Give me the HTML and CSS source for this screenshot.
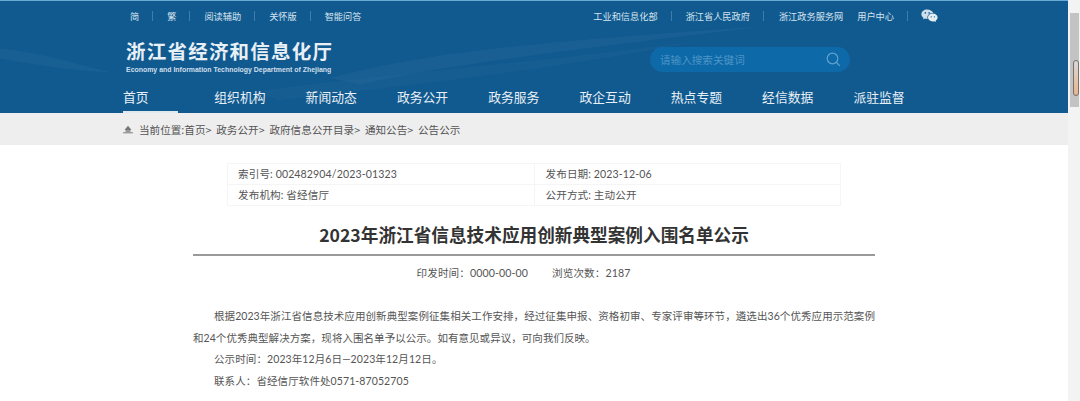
FILE: index.html
```html
<!DOCTYPE html>
<html lang="zh-CN">
<head>
<meta charset="utf-8">
<title>2023年浙江省信息技术应用创新典型案例入围名单公示</title>
<link rel="stylesheet" href="styles.css">
</head>
<body>
<div class="window">
  <div class="page">
    <header class="header">
      <svg class="waves" viewBox="0 0 1068 113" preserveAspectRatio="none" aria-hidden="true">
        <path d="M0 48 C40 52 70 62 110 72 C70 70 35 64 0 58Z" fill="#fff" opacity=".03"/>
        <path d="M330 78 C430 50 560 40 760 26 C600 46 470 60 360 84Z" fill="#fff" opacity=".035"/>
        <path d="M250 92 C400 72 540 62 700 40 C560 68 420 84 280 100Z" fill="#fff" opacity=".025"/>
      </svg>
      <div class="topbar">
        <ul class="links links-left">
          <li class="link sep">简</li>
          <li class="link sep">繁</li>
          <li class="link sep">阅读辅助</li>
          <li class="link sep">关怀版</li>
          <li class="link">智能问答</li>
        </ul>
        <ul class="links links-right">
          <li class="link sep">工业和信息化部</li>
          <li class="link sep">浙江省人民政府</li>
          <li class="link">浙江政务服务网</li>
          <li class="link sep user">用户中心</li>
          <li class="wechat">
            <svg width="17" height="14" viewBox="0 0 17 14" aria-hidden="true">
              <path d="M6.2 0.6C2.9 0.6 0.4 2.7 0.4 5.3c0 1.5.8 2.7 2.1 3.6L2 10.6l2-1c.7.2 1.4.3 2.1.3h.5a4 4 0 0 1-.2-1.3c0-2.6 2.4-4.5 5.4-4.5h.4C11.200 2.100 8.900.6 6.200.6Z" fill="#cfdfeb"/>
              <path d="M16.600 8.500c0-2.200-2.200-3.900-4.800-3.900s-4.800 1.700-4.800 3.900 2.200 3.900 4.800 3.900c.6 0 1.100-.1 1.600-.2l1.600.9-.4-1.400c1.200-.8 2-1.900 2-3.200Z" fill="#e6eef4"/>
              <circle cx="4.300" cy="3.900" r=".8" fill="#115a90"/>
              <circle cx="8.100" cy="3.900" r=".8" fill="#115a90"/>
              <circle cx="10.200" cy="7.800" r=".65" fill="#115a90"/>
              <circle cx="13.400" cy="7.800" r=".65" fill="#115a90"/>
            </svg>
          </li>
        </ul>
      </div>
      <div class="brand-row">
        <div class="brand">
          <div class="brand-cn">浙江省经济和信息化厅</div>
          <div class="brand-en">Economy and Information Technology Department of Zhejiang</div>
        </div>
        <div class="search">
          <span class="search-text">请输入搜索关键词</span>
          <svg width="15" height="15" viewBox="0 0 15 15" aria-hidden="true">
            <circle cx="6.500" cy="6.500" r="5.300" fill="none" stroke="#5fa3cf" stroke-width="1.200"/>
            <path d="M10.500 10.500L13.800 13.800" stroke="#5fa3cf" stroke-width="1.200" fill="none"/>
          </svg>
        </div>
      </div>
      <nav class="nav">
        <a class="nav-item active"><span>首页</span></a>
        <a class="nav-item"><span>组织机构</span></a>
        <a class="nav-item"><span>新闻动态</span></a>
        <a class="nav-item"><span>政务公开</span></a>
        <a class="nav-item"><span>政务服务</span></a>
        <a class="nav-item"><span>政企互动</span></a>
        <a class="nav-item"><span>热点专题</span></a>
        <a class="nav-item"><span>经信数据</span></a>
        <a class="nav-item"><span>派驻监督</span></a>
      </nav>
    </header>
    <div class="crumbs">
      <svg class="home" width="10" height="9" viewBox="0 0 10 9" aria-hidden="true">
        <path d="M5 .8L1.500 5h7Z" fill="#777"/>
        <path d="M.2 7.300h9.600v1H.2Z" fill="#777"/>
        <path d="M2.500 5h5v2h-5Z" fill="#999"/>
      </svg>
      <span>当前位置:首页&gt; 政务公开&gt; 政府信息公开目录&gt; 通知公告&gt; 公告公示</span>
    </div>
    <main class="main">
      <table class="info">
        <tr><td>索引号: 002482904/2023-01323</td><td>发布日期: 2023-12-06</td></tr>
        <tr><td>发布机构: 省经信厅</td><td>公开方式: 主动公开</td></tr>
      </table>
      <h1 class="title">2023年浙江省信息技术应用创新典型案例入围名单公示</h1>
      <div class="meta"><span>印发时间：0000-00-00</span><span>浏览次数：2187</span></div>
      <article class="article">
        <p>根据2023年浙江省信息技术应用创新典型案例征集相关工作安排，经过征集申报、资格初审、专家评审等环节，遴选出36个优秀应用示范案例和24个优秀典型解决方案，现将入围名单予以公示。如有意见或异议，可向我们反映。</p>
        <p>公示时间：2023年12月6日—2023年12月12日。</p>
        <p>联系人：省经信厅软件处0571-87052705</p>
      </article>
    </main>
  </div>
  <aside class="scrollbar" aria-hidden="true">
    <div class="sb-arrow"></div>
    <div class="sb-track"><div class="sb-thumb"></div></div>
  </aside>
</div>
</body>
</html>
```
FILE: styles.css
```css
* { box-sizing: border-box; }
html, body { margin: 0; padding: 0; height: 401px; overflow: hidden; background: #fff; }
body { font-family: "Noto Sans CJK SC", "Noto Sans", sans-serif; color: #444; }
ul { list-style: none; margin: 0; padding: 0; }

.window { display: flex; height: 401px; overflow: hidden; }
.page { flex: 1 1 auto; min-width: 0; }

.header {
  position: relative;
  height: 113px;
  background: #115a90;
  border-top: 1px solid #6aa9d2;
  overflow: hidden;
}
.waves { position: absolute; inset: 0; width: 100%; height: 100%; }

.topbar {
  position: relative;
  display: flex;
  justify-content: space-between;
  height: 30px;
  padding: 0 130px;
  align-items: center;
}
.links { display: flex; align-items: center; }
.link {
  font-size: 9.200px;
  line-height: 12px;
  color: #d5e3ee;
  white-space: nowrap;
}
.links-left .link.sep { margin-right: 28px; position: relative; }
.links-left .link.sep::after, .links-right .link.sep::after {
  content: "";
  position: absolute;
  top: 1px;
  right: -14px;
  width: 1px;
  height: 10px;
  background: #3d7eac;
}
.links-right .link { position: relative; margin-right: 28px; }
.links-right .link:nth-child(2) { margin-right: 29px; }
.links-right .link:nth-child(3) { margin-right: 14px; }
.links-right .user { margin-right: 27px; }
.wechat { display: flex; }

.brand-row {
  position: relative;
  display: flex;
  justify-content: space-between;
  padding: 8px 218px 0 126px;
  height: 50px;
}
.brand-cn {
  font-size: 19.500px;
  line-height: 23px;
  font-weight: 700;
  color: #e8f0f6;
  letter-spacing: 1.220px;
  white-space: nowrap;
}
.brand-en {
  font-size: 6.950px;
  line-height: 9px;
  font-weight: 700;
  font-family: "Liberation Sans", sans-serif;
  color: #cfdfeb;
  white-space: nowrap;
  margin-top: 3px;
}
.search {
  display: flex;
  align-items: center;
  justify-content: space-between;
  width: 200px;
  height: 25px;
  margin-top: 8px;
  padding: 0 9px 0 10px;
  border-radius: 13px;
  background: #0e69a8;
}
.search-text { font-size: 10.600px; color: #4c95c6; white-space: nowrap; }

.nav { position: relative; display: flex; padding-left: 123px; height: 32px; }
.nav-item {
  flex: 0 0 91.300px;
  font-size: 12.800px;
  line-height: 32px;
  color: #e9f0f5;
  white-space: nowrap;
}
.nav-item span { display: inline-block; height: 32px; }
.nav-item.active span { width: 55px; border-bottom: 2px solid #dfe9f0; }

.crumbs {
  display: flex;
  align-items: center;
  gap: 6px;
  height: 32px;
  padding-left: 123px;
  background: #eeeeee;
  font-size: 10.600px;
  word-spacing: 2.500px;
  color: #555;
}

.main { padding: 18px 193px 0; }
.info {
  width: 614px;
  margin: 0 auto 0 34px;
  border-collapse: collapse;
  table-layout: fixed;
  font-family: "Lato", "Noto Sans CJK SC", sans-serif;
  font-size: 10.600px;
  letter-spacing: .1px;
  color: #555;
}
.info td {
  height: 21px;
  padding: 0 0 0 10px;
  border: 1px solid #f5f5f5;
  line-height: 16px;
  white-space: nowrap;
}
.info td + td { padding-left: 11px; }
.title {
  margin: 0;
  padding-top: 15px;
  height: 50px;
  border-bottom: 2px solid #9a9a9a;
  font-size: 17.650px;
  line-height: 27px;
  font-weight: 700;
  text-align: center;
  color: #333;
  white-space: nowrap;
}
.meta {
  display: flex;
  justify-content: center;
  gap: 24px;
  padding: 9px 21px 0 0;
  font-family: "Lato", "Noto Sans CJK SC", sans-serif;
  font-size: 10.600px;
  letter-spacing: .1px;
  line-height: 16px;
  color: #555;
}
.article {
  padding-top: 25px;
  font-family: "Lato", "Noto Sans CJK SC", sans-serif;
  font-size: 10.500px;
  letter-spacing: .05px;
  line-height: 21.600px;
  color: #555;
}
.article p { margin: 0; text-indent: 2em; text-align: justify; }
.article p + p { letter-spacing: .1px; }

.scrollbar { flex: 0 0 12px; background: #f3f3f3; display: flex; flex-direction: column; }
.sb-arrow { height: 13px; }
.sb-track { height: 94px; margin: 0 1px 0 2px; background: #c3c3c3; position: relative; }
.sb-thumb {
  position: absolute;
  top: 47px;
  left: 3px;
  width: 6px;
  height: 36px;
  border: 1px solid #77706b;
  border-radius: 3px;
  background: linear-gradient(#d8d8d8, #e9b48d);
}
```
